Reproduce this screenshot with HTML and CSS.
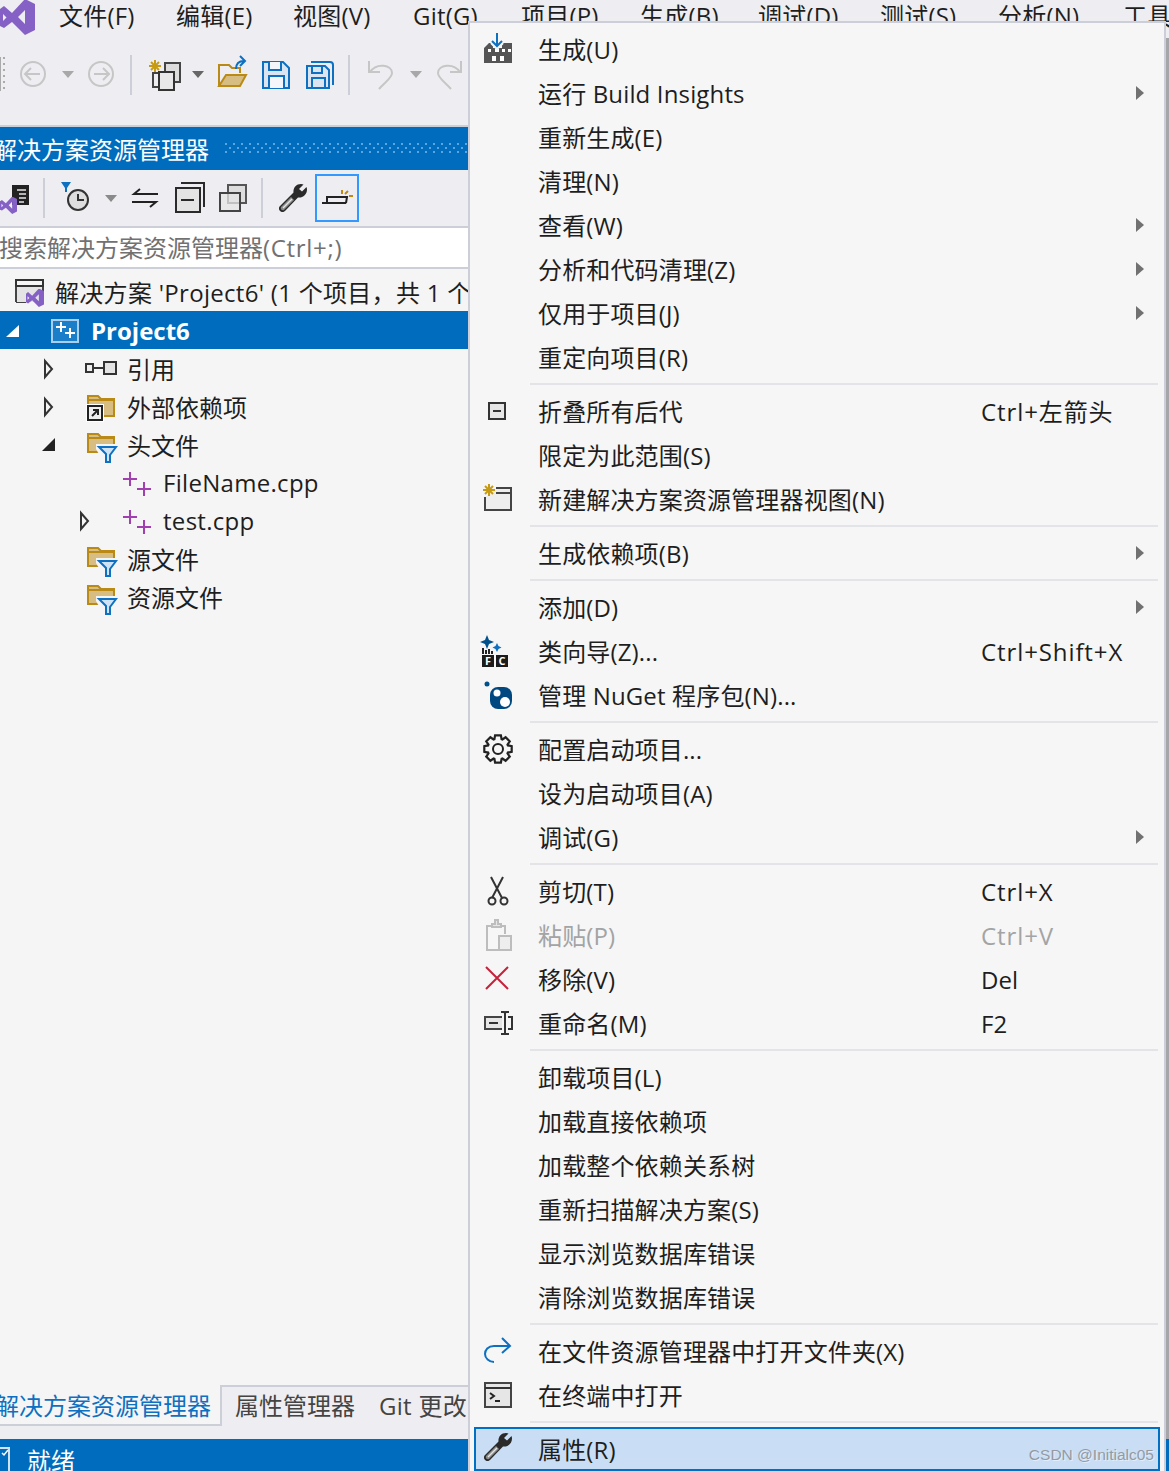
FILE: index.html
```html
<!DOCTYPE html>
<html lang="zh-CN">
<head>
<meta charset="utf-8">
<title>Visual Studio</title>
<link rel="stylesheet" href="styles.css">
</head>
<body>
<svg class="defs" width="0" height="0" aria-hidden="true">
  <symbol id="vs" viewBox="0 0 35 35"><path fill="#8661c5" fill-rule="evenodd" d="M25-1 35 4V30L25 35 12 22 4 28 0 26V9L4 6 12 13ZM25 10 18 17 25 24Z"/><path fill="#eeeef2" d="M3 14 6.500 17.500 3 21Z"/></symbol>
  <symbol id="wrench" viewBox="0 0 28 28"><path fill="#2a2a2a" d="M22 0c-5 0-8 4-7.500 8.500L1 22c-1.500 1.500-1.500 3.500 0 5s3.500 1.500 5 0L19 13.500c5 .5 9-3 9-8 0-1-.2-1.800-.5-2.500L23 7.500 20 5 24.500.5C23.800.2 23 0 22 0z"/><path fill="#8a8a8a" d="M2 23 12 13l3 3L5 26c-2 1-4-1-3-3z"/><path stroke="#e4e4e4" stroke-width="1.500" d="M4 24 13 15"/></symbol>
  <symbol id="filterfolder" viewBox="0 0 43 38"><path fill="#d8bd82" stroke="#b98b16" stroke-width="2" d="M4 9h10l3 3h13v15H4z"/><path fill="none" stroke="#b98b16" stroke-width="2" d="M4 13h26"/><path fill="#f5f5f5" d="M12 19h23v8l-7 11h-8l-8-14z"/><path fill="#cfe3f5" stroke="#0e70c0" stroke-width="2" d="M15 22h17l-6 8v7h-4v-8z"/></symbol>
  <symbol id="cppfile" viewBox="0 0 43 38"><path fill="none" stroke="#a23fb0" stroke-width="2" d="M10 9v14M3 16h14M24 19v14M17 26h14"/></symbol>
</svg>

<div class="menubar">
  <svg class="logo" width="59" height="38"><use href="#vs" width="35" height="35"/></svg>
  <span class="mb w117">文件(F)</span><span class="mb w117">编辑(E)</span><span class="mb w120">视图(V)</span><span class="mb w108">Git(G)</span><span class="mb w119">项目(P)</span><span class="mb w118">生成(B)</span><span class="mb w122">调试(D)</span><span class="mb w118">测试(S)</span><span class="mb w125">分析(N)</span><span class="mb">工具</span>
</div>

<div class="workspace">
  <div class="pane">
    <div class="toolbar-main">
      <svg width="130" height="44" viewBox="0 0 130 44">
        <g fill="#aaa"><rect x="0" y="5" width="1" height="34"/><rect x="3" y="5" width="2" height="2"/><rect x="3" y="11" width="2" height="2"/><rect x="3" y="17" width="2" height="2"/><rect x="3" y="23" width="2" height="2"/><rect x="3" y="29" width="2" height="2"/><rect x="3" y="35" width="2" height="2"/></g>
        <circle cx="33" cy="22" r="12" fill="none" stroke="#c6c6c6" stroke-width="2"/><path d="M40 22H26M31 16l-6 6 6 6" fill="none" stroke="#c6c6c6" stroke-width="2"/>
        <polygon points="62,19 74,19 68,26" fill="#a8a8a8"/>
        <circle cx="101" cy="22" r="12" fill="none" stroke="#c6c6c6" stroke-width="2"/><path d="M94 22h14M103 16l6 6-6 6" fill="none" stroke="#c6c6c6" stroke-width="2"/>
      </svg>
      <i class="sep"></i>
      <svg width="216" height="44" viewBox="0 0 216 44">
        <path d="M23 8v12M17 14h12M19 10l8 8M27 10l-8 8" stroke="#c79a13" stroke-width="2"/>
        <rect x="33" y="11" width="15" height="19" fill="#ddd" stroke="#444" stroke-width="2"/>
        <path d="M27 35h-6V21h6" fill="none" stroke="#444" stroke-width="2"/>
        <rect x="27" y="20" width="15" height="18" fill="#e8e8e8" stroke="#333" stroke-width="2"/>
        <polygon points="60,19 72,19 66,26" fill="#666"/>
        <path d="M87 34V13h10l3 3h8v5" fill="none" stroke="#b98b16" stroke-width="2"/>
        <path d="M87 34h21l6-11H94z" fill="#d8bd82" stroke="#b98b16" stroke-width="2"/>
        <path d="M104 17c0-6 3-8 8-8M108 4l5 5-5 5" fill="none" stroke="#0e70c0" stroke-width="2"/>
        <path d="M131 10h20l6 6v20h-26z" fill="#dbe5f1" stroke="#0e70c0" stroke-width="2"/>
        <path d="M137 10v8h12v-8M137 36V24h15v12" fill="#f4f6f9" stroke="#0e70c0" stroke-width="2"/>
        <path d="M175 14h18l4 4v18h-22z" fill="#dbe5f1" stroke="#0e70c0" stroke-width="2"/>
        <path d="M180 14v7h10v-7M180 36v-10h13v10M179 10h19q3 0 3 3v20" fill="none" stroke="#0e70c0" stroke-width="2"/>
      </svg>
      <i class="sep"></i>
      <svg width="117" height="44" viewBox="0 0 117 44">
        <path d="M19 9v11h11M20 20C27 10 42 13 42 21c0 5-7 9-13 16" fill="none" stroke="#c6c6c6" stroke-width="2"/>
        <polygon points="60,19 72,19 66,26" fill="#a8a8a8"/>
        <path d="M111 9v11h-11M110 20C103 10 88 13 88 21c0 5 7 9 13 16" fill="none" stroke="#c6c6c6" stroke-width="2"/>
      </svg>
    </div>

    <div class="titlebar">
      <span class="title-text">解决方案资源管理器</span>
      <svg class="grip" height="10"><defs><pattern id="dots" width="8" height="8" patternUnits="userSpaceOnUse"><rect x="0" y="0" width="2" height="2" fill="#5ba6e0"/><rect x="4" y="4" width="2" height="2" fill="#5ba6e0"/></pattern></defs><rect width="100%" height="100%" fill="url(#dots)"/></svg>
    </div>

    <div class="toolbar-se">
      <svg width="43" height="56" viewBox="0 0 43 56">
        <rect x="12" y="15" width="17" height="20" fill="#222"/><path d="M17 20h9M19 24h7M19 28h7M19 32h5" stroke="#e6e6e6" stroke-width="1.500"/>
        <use href="#vs" x="0" y="27" width="17" height="17"/>
      </svg>
      <i class="sep sep-se"></i>
      <svg width="216" height="56" viewBox="0 0 216 56">
        <polygon points="16,12 26,12 22,18 22,22 20,22 20,18" fill="#0e70c0"/>
        <circle cx="33" cy="30" r="10" fill="#dedede" stroke="#333" stroke-width="2"/><path d="M33 24v6h6" fill="none" stroke="#333" stroke-width="2"/>
        <polygon points="60,25 72,25 66,32" fill="#8a8a8a"/>
        <path d="M113 24H89l6-5M87 32h24l-6 5" fill="none" stroke="#222" stroke-width="2"/>
        <rect x="131" y="18" width="24" height="24" fill="#e4e4e4" stroke="#2a2a2a" stroke-width="2"/><path d="M136 13h23v24M136 30h13" fill="none" stroke="#2a2a2a" stroke-width="2"/>
        <rect x="183" y="15" width="18" height="18" fill="#ddd" stroke="#555" stroke-width="2"/><rect x="175" y="23" width="20" height="18" fill="#e6e6e6" fill-opacity=".75" stroke="#444" stroke-width="2"/>
      </svg>
      <i class="sep sep-se"></i>
      <svg width="52" height="56" viewBox="0 0 52 56"><use href="#wrench" x="16" y="14" width="28" height="28"/></svg>
      <div class="btn-on">
        <svg width="40" height="44" viewBox="0 0 40 44">
          <path d="M5 27h24M10 27v-6h20l-1 6" fill="none" stroke="#222" stroke-width="2"/>
          <path d="M25 14v4M31 15l-3 3M32 20h4" stroke="#c08a10" stroke-width="2"/>
        </svg>
      </div>
    </div>

    <div class="search">搜索解决方案资源管理器<span class="lat-wide">(Ctrl+;)</span></div>

    <div class="tree">
      <div class="row-root">
        <svg width="43" height="39" viewBox="0 0 43 39">
          <path d="M4 30V8h27v15M4 30h10" fill="none" stroke="#444" stroke-width="2"/><rect x="4" y="8" width="27" height="6" fill="#f5f5f5" stroke="#333" stroke-width="2"/><rect x="5" y="15" width="25" height="15" fill="#e4e4e4"/>
          <use href="#vs" x="14" y="17" width="18" height="18"/>
        </svg>
        <span class="label lat">解决方案 'Project6' (1 个项目，共 1 个)</span>
      </div>
      <div class="row row-selected">
        <svg class="twist" width="48" height="38"><polygon points="19,14 19,26 6,26" fill="#fff"/></svg>
        <svg width="43" height="38" viewBox="0 0 43 38"><rect x="4" y="9" width="26" height="22" fill="#1a7ec8" stroke="#a8cfee" stroke-width="2"/><path d="M13 11v10M8 16h10M22 17v10M17 22h10" stroke="#fff" stroke-width="2"/></svg>
        <span class="label bold">Project6</span>
      </div>
      <div class="row lv1">
        <svg class="twist" width="48" height="38"><polygon points="9,12 9,28 16,20" fill="none" stroke="#333" stroke-width="2"/></svg>
        <svg width="43" height="38" viewBox="0 0 43 38"><rect x="2" y="15" width="7" height="8" fill="#eee" stroke="#333" stroke-width="2"/><path d="M9 19h11" stroke="#333" stroke-width="2"/><rect x="20" y="13" width="12" height="12" fill="#e4e4e4" stroke="#333" stroke-width="2"/></svg>
        <span class="label">引用</span>
      </div>
      <div class="row lv1">
        <svg class="twist" width="48" height="38"><polygon points="9,12 9,28 16,20" fill="none" stroke="#333" stroke-width="2"/></svg>
        <svg width="43" height="38" viewBox="0 0 43 38"><path fill="#d8bd82" stroke="#b98b16" stroke-width="2" d="M4 9h10l3 3h13v17H4z"/><path fill="none" stroke="#b98b16" stroke-width="2" d="M4 13h26"/><rect x="2" y="17" width="18" height="18" fill="#fff"/><rect x="4" y="19" width="14" height="14" fill="#eee" stroke="#222" stroke-width="2"/><path d="M8 29l6-6M9 23h5v5" fill="none" stroke="#222" stroke-width="2"/></svg>
        <span class="label">外部依赖项</span>
      </div>
      <div class="row lv1">
        <svg class="twist" width="48" height="38"><polygon points="19,13 19,26 6,26" fill="#222"/></svg>
        <svg width="43" height="38"><use href="#filterfolder"/></svg>
        <span class="label">头文件</span>
      </div>
      <div class="row lv2">
        <span class="twist-empty"></span>
        <svg width="43" height="38"><use href="#cppfile"/></svg>
        <span class="label lat">FileName.cpp</span>
      </div>
      <div class="row lv2">
        <svg class="twist" width="48" height="38"><polygon points="9,12 9,28 16,20" fill="none" stroke="#333" stroke-width="2"/></svg>
        <svg width="43" height="38"><use href="#cppfile"/></svg>
        <span class="label lat">test.cpp</span>
      </div>
      <div class="row lv1">
        <span class="twist-empty"></span>
        <svg width="43" height="38"><use href="#filterfolder"/></svg>
        <span class="label">源文件</span>
      </div>
      <div class="row lv1">
        <span class="twist-empty"></span>
        <svg width="43" height="38"><use href="#filterfolder"/></svg>
        <span class="label">资源文件</span>
      </div>
    </div>

    <div class="tabs">
      <div class="tab tab-active"><span class="tab-text-cut">解决方案资源管理器</span></div>
      <div class="tab-rest"><span class="tab">属性管理器</span><span class="tab lat-tab">Git 更改</span></div>
    </div>
  </div>
  <div class="backdrop"></div>
</div>

<div class="statusbar">
  <svg width="27" height="32" viewBox="0 0 27 32"><path d="M0 9h9v23" fill="none" stroke="#cfe3f5" stroke-width="2"/><path d="M2 14l2 2 4-5" fill="none" stroke="#fff" stroke-width="1.500"/></svg>
  <span>就绪</span>
</div>

<div class="menu">
  <div class="mi"><svg class="ico" width="36" height="36" viewBox="0 0 36 36"><path fill="#555" d="M4 15l5-5h4v5h9v-5h10v20H4z"/><path fill="#fff" d="M8 16h3v3H8zM15 16h4v3h-4zM22 16h3v3h-3zM28 16h3v3h-3zM12 23h4v5h-4zM20 23h4v5h-4z"/><path d="M17 1v13M12 9l5 5 5-5" fill="none" stroke="#f6f6f6" stroke-width="5"/><path d="M17 0v13M12 8l5 5 5-5" fill="none" stroke="#0e70c0" stroke-width="2"/></svg><span class="lb">生成(U)</span></div>
  <div class="mi"><i class="ico"></i><span class="lb">运行 Build Insights</span><svg class="sub" width="8" height="16"><polygon points="0,1 8,8 0,15"/></svg></div>
  <div class="mi"><i class="ico"></i><span class="lb">重新生成(E)</span></div>
  <div class="mi"><i class="ico"></i><span class="lb">清理(N)</span></div>
  <div class="mi"><i class="ico"></i><span class="lb">查看(W)</span><svg class="sub" width="8" height="16"><polygon points="0,1 8,8 0,15"/></svg></div>
  <div class="mi"><i class="ico"></i><span class="lb">分析和代码清理(Z)</span><svg class="sub" width="8" height="16"><polygon points="0,1 8,8 0,15"/></svg></div>
  <div class="mi"><i class="ico"></i><span class="lb">仅用于项目(J)</span><svg class="sub" width="8" height="16"><polygon points="0,1 8,8 0,15"/></svg></div>
  <div class="mi"><i class="ico"></i><span class="lb">重定向项目(R)</span></div>
  <div class="ms"></div>
  <div class="mi"><svg class="ico" width="36" height="36" viewBox="0 0 36 36"><rect x="9" y="8" width="16" height="16" fill="#e6e6e6" stroke="#333" stroke-width="2"/><path d="M13 16h8" stroke="#333" stroke-width="2"/></svg><span class="lb">折叠所有后代</span><span class="sc">Ctrl+左箭头</span></div>
  <div class="mi"><i class="ico"></i><span class="lb">限定为此范围(S)</span></div>
  <div class="mi"><svg class="ico" width="36" height="36" viewBox="0 0 36 36"><path d="M16 5h15v22H5V14" fill="#eee" stroke="#444" stroke-width="2"/><path d="M16 10h15" stroke="#444" stroke-width="2"/><path d="M9 1v12M3 7h12M5 3l8 8M13 3l-8 8" stroke="#c79a13" stroke-width="2"/></svg><span class="lb">新建解决方案资源管理器视图(N)</span></div>
  <div class="ms"></div>
  <div class="mi"><i class="ico"></i><span class="lb">生成依赖项(B)</span><svg class="sub" width="8" height="16"><polygon points="0,1 8,8 0,15"/></svg></div>
  <div class="ms"></div>
  <div class="mi"><i class="ico"></i><span class="lb">添加(D)</span><svg class="sub" width="8" height="16"><polygon points="0,1 8,8 0,15"/></svg></div>
  <div class="mi"><svg class="ico" width="36" height="36" viewBox="0 0 36 36"><path fill="#00508c" d="M7 0l2 5 5 2-5 2-2 5-2-5-5-2 5-2z"/><path fill="#0e70c0" d="M17 8l1.500 3 3 1.500-3 1.500-1.500 3-1.500-3-3-1.500 3-1.500z"/><path fill="#222" d="M2 13h2v6H2zM5 15h2v4H5zM8 14h2v5H8zM11 16h2v3h-2z"/><rect x="2" y="20" width="12" height="12" fill="#1c1c1c"/><rect x="16" y="20" width="12" height="12" fill="#1c1c1c"/><text class="fc" x="8" y="30">F</text><text class="fc" x="22" y="30">C</text></svg><span class="lb">类向导(Z)...</span><span class="sc">Ctrl+Shift+X</span></div>
  <div class="mi"><svg class="ico" width="36" height="36" viewBox="0 0 36 36"><circle cx="7" cy="5" r="2.500" fill="#00508c"/><rect x="10" y="8" width="22" height="22" rx="8" fill="#004880"/><circle cx="17" cy="14" r="3.500" fill="#fff"/><circle cx="25" cy="23" r="5" fill="#fff"/></svg><span class="lb">管理 NuGet 程序包(N)...</span></div>
  <div class="ms"></div>
  <div class="mi"><svg class="ico" width="36" height="36" viewBox="0 0 36 36"><g transform="translate(18 16)"><polygon fill="#f6f6f6" stroke="#222" stroke-width="2.200" points="9.87,-3.59 13.69,-2.91 13.69,2.91 9.87,3.59 9.52,4.44 11.74,7.62 7.62,11.74 4.44,9.52 3.59,9.87 2.91,13.69 -2.91,13.69 -3.59,9.87 -4.44,9.52 -7.62,11.74 -11.74,7.62 -9.52,4.44 -9.87,3.59 -13.69,2.91 -13.69,-2.91 -9.87,-3.59 -9.52,-4.44 -11.74,-7.62 -7.62,-11.74 -4.44,-9.52 -3.59,-9.87 -2.91,-13.69 2.91,-13.69 3.59,-9.87 4.44,-9.52 7.62,-11.74 11.74,-7.62 9.52,-4.44"/><circle r="5" fill="none" stroke="#222" stroke-width="2"/></g></svg><span class="lb">配置启动项目...</span></div>
  <div class="mi"><i class="ico"></i><span class="lb">设为启动项目(A)</span></div>
  <div class="mi"><i class="ico"></i><span class="lb">调试(G)</span><svg class="sub" width="8" height="16"><polygon points="0,1 8,8 0,15"/></svg></div>
  <div class="ms"></div>
  <div class="mi"><svg class="ico" width="36" height="36" viewBox="0 0 36 36"><path d="M11 2l11 21M23 2L12 23" fill="none" stroke="#333" stroke-width="2"/><circle cx="12" cy="26" r="3.500" fill="none" stroke="#333" stroke-width="2"/><circle cx="24" cy="26" r="3.500" fill="none" stroke="#333" stroke-width="2"/></svg><span class="lb">剪切(T)</span><span class="sc">Ctrl+X</span></div>
  <div class="mi disabled"><svg class="ico" width="36" height="36" viewBox="0 0 36 36"><path d="M18 31H7V7h5M22 7h3v8" fill="none" stroke="#bdbdbd" stroke-width="2"/><path d="M12 8V5h3V1h3v4h3v3z" fill="#e6e6e6" stroke="#bdbdbd" stroke-width="2"/><rect x="19" y="17" width="12" height="14" fill="#eee" stroke="#bdbdbd" stroke-width="2"/></svg><span class="lb">粘贴(P)</span><span class="sc">Ctrl+V</span></div>
  <div class="mi"><svg class="ico" width="36" height="36" viewBox="0 0 36 36"><path d="M6 4l22 22M28 4L6 26" stroke="#c5213b" stroke-width="2"/></svg><span class="lb">移除(V)</span><span>Del</span></div>
  <div class="mi"><svg class="ico" width="36" height="36" viewBox="0 0 36 36"><path d="M22 10H5v12h17" fill="#e6e6e6" stroke="#444" stroke-width="2"/><path d="M9 16h9" stroke="#333" stroke-width="2"/><path d="M21 5h3l1 1 1-1h3M21 27h3l1-1 1 1h3M25 6v20M28 10h4v12h-4" fill="none" stroke="#333" stroke-width="2"/></svg><span class="lb">重命名(M)</span><span>F2</span></div>
  <div class="ms"></div>
  <div class="mi"><i class="ico"></i><span class="lb">卸载项目(L)</span></div>
  <div class="mi"><i class="ico"></i><span class="lb">加载直接依赖项</span></div>
  <div class="mi"><i class="ico"></i><span class="lb">加载整个依赖关系树</span></div>
  <div class="mi"><i class="ico"></i><span class="lb">重新扫描解决方案(S)</span></div>
  <div class="mi"><i class="ico"></i><span class="lb">显示浏览数据库错误</span></div>
  <div class="mi"><i class="ico"></i><span class="lb">清除浏览数据库错误</span></div>
  <div class="ms"></div>
  <div class="mi"><svg class="ico" width="36" height="36" viewBox="0 0 36 36"><path d="M29 11H14C8 11 5 15 5 19s4 8 9 8M22 3l8 8-8 7" fill="none" stroke="#0e70c0" stroke-width="2"/></svg><span class="lb">在文件资源管理器中打开文件夹(X)</span></div>
  <div class="mi"><svg class="ico" width="36" height="36" viewBox="0 0 36 36"><rect x="5" y="4" width="26" height="24" fill="#e6e6e6" stroke="#444" stroke-width="2"/><path d="M5 9h26" stroke="#333" stroke-width="2"/><path d="M10 14l4 3-4 3M15 22h5" fill="none" stroke="#222" stroke-width="2"/></svg><span class="lb">在终端中打开</span></div>
  <div class="ms"></div>
  <div class="mi mi-selected"><svg class="ico" width="36" height="36" viewBox="0 0 36 36"><use href="#wrench" x="4" y="2" width="28" height="28"/></svg><span class="lb">属性(R)</span></div>
</div>
<span class="watermark">CSDN @Initialc05</span>
</body>
</html>
```
FILE: styles.css
```css
* { box-sizing: border-box; }
html, body { margin: 0; height: 100%; }
body {
  width: 1169px;
  height: 1471px;
  overflow: hidden;
  position: relative;
  display: flex;
  flex-direction: column;
  background: #eeeef2;
  color: #1e1e1e;
  font-family: "Open Sans", "Noto Sans CJK SC", sans-serif;
  font-size: 24px;
}
svg { display: block; flex: none; }
.defs { position: absolute; }

.menubar { height: 38px; flex: none; display: flex; align-items: flex-start; white-space: nowrap; overflow: hidden; }
.mb { display: block; line-height: 32px; flex: none; letter-spacing: .2px; }
.w108 { width: 108px; } .w117 { width: 117px; } .w118 { width: 118px; } .w119 { width: 119px; } .w120 { width: 120px; } .w122 { width: 122px; } .w125 { width: 125px; }

.workspace { flex: 1; min-height: 0; display: flex; }
.pane { width: 468px; flex: none; display: flex; flex-direction: column; overflow: hidden; }
.backdrop { flex: 1; background: #a6a6aa; }

.toolbar-main { height: 89px; flex: none; display: flex; align-items: flex-start; padding-top: 14px; border-bottom: 2px solid #ccced8; }
.sep { display: block; width: 2px; height: 40px; margin-top: 3px; background: #ccced8; flex: none; }
.sep-se { margin-top: 8px; }

.titlebar { height: 43px; flex: none; background: #006cbe; color: #fff; display: flex; align-items: center; white-space: nowrap; overflow: hidden; }
.title-text { margin-left: -7px; width: 232px; flex: none; line-height: 43px; padding-top: 2px; }
.grip { flex: 1; min-width: 0; margin-top: -1px; }

.toolbar-se { height: 56px; flex: none; display: flex; align-items: flex-start; }
.btn-on { width: 44px; height: 48px; margin-top: 4px; border: 2px solid #3399ff; flex: none; }

.search { height: 43px; flex: none; background: #fff; border-top: 2px solid #ccced8; border-bottom: 2px solid #ccced8; color: #717171; line-height: 40px; white-space: nowrap; overflow: hidden; text-indent: -1px; }
.lat-wide { letter-spacing: .7px; }

.tree { flex: 1; min-height: 0; background: #f5f5f5; padding-top: 3px; white-space: nowrap; overflow: hidden; }
.row-root { height: 39px; display: flex; align-items: center; padding-left: 12px; }
.row { height: 38px; display: flex; align-items: center; }
.lv1 { padding-left: 36px; }
.lv2 { padding-left: 72px; }
.twist-empty { width: 48px; flex: none; }
.row-selected { background: #006cbe; color: #fff; }
.label { line-height: 38px; padding-top: 4px; }
.lat { letter-spacing: .3px; padding-top: 2px; }
.bold { font-weight: 700; padding-top: 2px; }

.tabs { height: 54px; flex: none; display: flex; align-items: flex-start; white-space: nowrap; background: #eeeef2; }
.tab { line-height: 38px; color: #444; }
.lat-tab { letter-spacing: .3px; }
.tab-active { width: 222px; height: 41px; flex: none; background: #f5f5f5; border-right: 2px solid #ccced8; border-bottom: 2px solid #ccced8; color: #0e70c0; overflow: hidden; line-height: 42px; }
.tab-text-cut { margin-left: -5px; display: block; width: 230px; }
.tab-rest { flex: 1; display: flex; gap: 24px; padding-left: 13px; border-top: 2px solid #ccced8; height: 41px; overflow: hidden; }

.statusbar { height: 32px; flex: none; background: #006cbe; color: #fff; display: flex; align-items: flex-start; overflow: hidden; }
.statusbar span { line-height: 44px; }

.menu {
  position: absolute;
  left: 468px;
  top: 21px;
  width: 698px;
  height: 1450px;
  background: #f6f6f6;
  border: 2px solid #ccced8;
  border-bottom: 0;
  padding-top: 6px;
  overflow: hidden;
  white-space: nowrap;
}
.mi { height: 44px; display: flex; align-items: flex-start; padding-left: 10px; line-height: 42px; }
.ico { display: block; width: 36px; height: 36px; flex: none; margin: 4px 22px 0 0; }
.lb { display: block; width: 443px; flex: none; letter-spacing: .15px; }
.sc { letter-spacing: .9px; }
.sub { align-self: center; margin: -4px 20px 0 auto; fill: #717171; }
.ms { height: 2px; margin: 2px 6px 6px 60px; background: #e2e4e8; }
.disabled { color: #a2a4a5; }
.fc { font-size: 11px; font-weight: 700; fill: #fff; text-anchor: middle; font-family: "Open Sans", sans-serif; }
.mi-selected { margin: -2px 4px 0; height: 44px; border: 2px solid #0070c4; background: #c9def5; padding: 2px 0 0 4px; line-height: 38px; }
.mi-selected .ico { margin-top: 0; }

.watermark { position: absolute; right: 15px; top: 1446px; font: 15.500px "Liberation Sans", sans-serif; color: #959aa2; text-shadow: 1px 1px 0 rgba(255,255,255,.45); }
```
